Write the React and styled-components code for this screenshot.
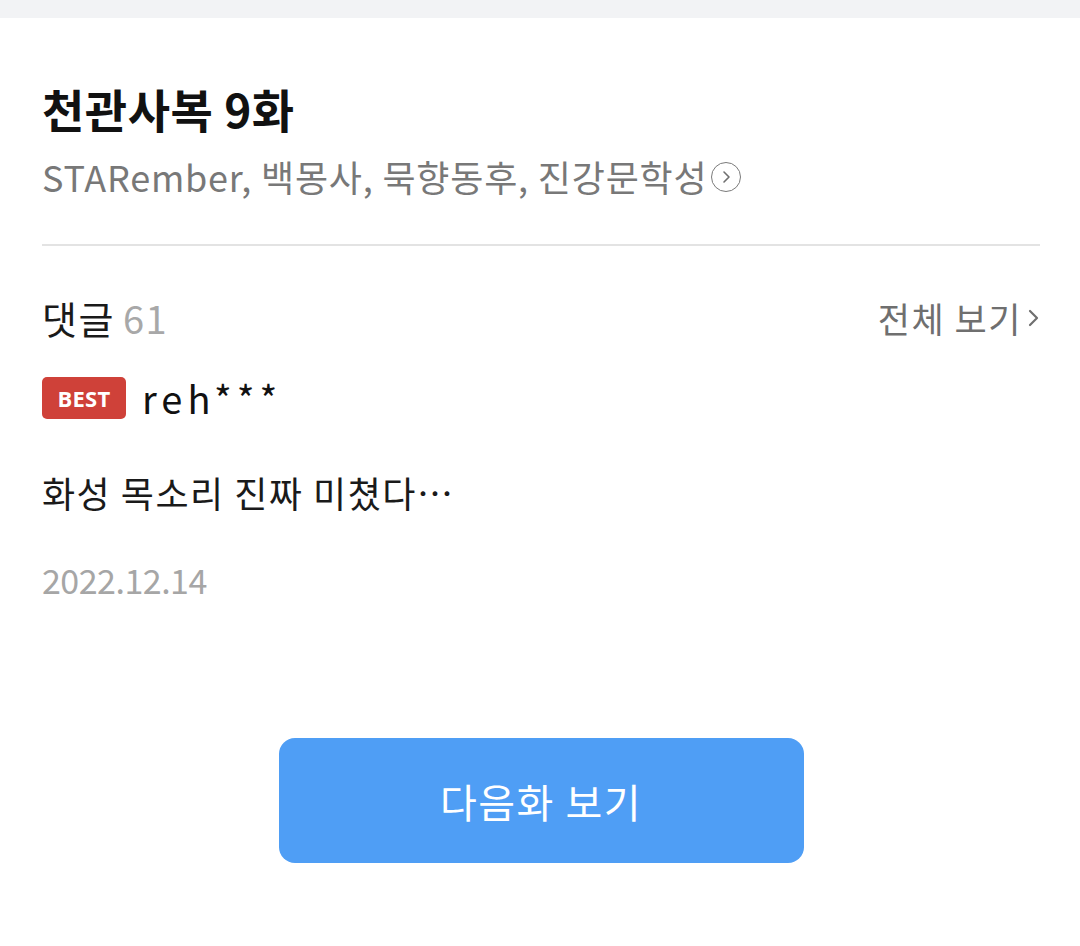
import React from "react";
import styled, { createGlobalStyle } from "styled-components";

const GlobalStyle = createGlobalStyle`
  html, body {
    margin: 0;
    padding: 0;
    background: #ffffff;
  }
  body {
    font-family: "Noto Sans CJK KR", "Noto Sans", sans-serif;
    color: #1a1a1a;
  }
`;

const TopBar = styled.div`
  height: 18px;
  background: #f2f3f5;
`;

const Page = styled.div`
  padding: 0 40px 0 42px;
`;

const Header = styled.section`
  padding-top: 52px;
  padding-bottom: 42px;
  border-bottom: 2px solid #e3e3e3;
`;

const Title = styled.h1`
  margin: 0;
  font-size: 46px;
  font-weight: 700;
  line-height: 76px;
  letter-spacing: 0.5px;
  color: #111;
`;

const Authors = styled.div`
  display: flex;
  align-items: center;
  margin-top: 4px;
  font-size: 36px;
  line-height: 52px;
  color: #787878;
  letter-spacing: 0.8px;
`;

const CircleArrow = styled.span`
  display: inline-flex;
  align-items: center;
  justify-content: center;
  width: 30px;
  height: 30px;
  margin-left: 4px;
  margin-top: 2px;
  border: 1.5px solid #7a7a7a;
  border-radius: 50%;
  box-sizing: border-box;
`;

const CommentSection = styled.section`
  padding-top: 44px;
`;

const SectionHead = styled.div`
  display: flex;
  align-items: center;
  justify-content: space-between;
`;

const CommentTitle = styled.h2`
  margin: 0;
  font-size: 38px;
  font-weight: 400;
  line-height: 56px;
  letter-spacing: 1.5px;
  color: #1a1a1a;
`;

const Count = styled.span`
  color: #a8a8a8;
  margin-left: 8px;
`;

const ViewAll = styled.a`
  display: flex;
  align-items: center;
  gap: 6px;
  font-size: 35px;
  line-height: 56px;
  letter-spacing: 1.5px;
  color: #6f6f6f;
  text-decoration: none;
`;

const UserRow = styled.div`
  display: flex;
  align-items: center;
  gap: 16px;
  margin-top: 27px;
`;

const Badge = styled.span`
  display: inline-flex;
  align-items: center;
  justify-content: center;
  width: 84px;
  height: 42px;
  border-radius: 5px;
  background: #cf4139;
  color: #fff;
  font-family: "Open Sans", "Noto Sans", sans-serif;
  font-size: 22px;
  font-weight: 700;
  letter-spacing: 0.2px;
`;

const UserName = styled.span`
  font-size: 38px;
  line-height: 50px;
  color: #111;
  letter-spacing: 5px;
`;

const CommentText = styled.p`
  margin: 41px 0 0;
  font-size: 36px;
  line-height: 56px;
  letter-spacing: 1.5px;
  color: #1a1a1a;
`;

const DateText = styled.div`
  margin-top: 36px;
  font-size: 34px;
  line-height: 48px;
  color: #a6a6a6;
  letter-spacing: -0.5px;
`;

const ButtonWrap = styled.div`
  display: flex;
  justify-content: center;
  padding-top: 134px;
`;

const NextButton = styled.button`
  width: 525px;
  height: 125px;
  border: none;
  border-radius: 16px;
  background: #4f9ef5;
  color: #fff;
  font-family: "Noto Sans CJK KR", "Noto Sans", sans-serif;
  font-size: 40px;
  font-weight: 400;
  letter-spacing: 1.5px;
  cursor: pointer;
`;

export default function App() {
  return (
    <>
      <GlobalStyle />
      <TopBar />
      <Page>
        <Header>
          <Title>천관사복 9화</Title>
          <Authors>
            STARember, 백몽사, 묵향동후, 진강문학성
            <CircleArrow>
              <svg width="12" height="14" viewBox="0 0 12 14">
                <path d="M4 2 L9 7 L4 12" fill="none" stroke="#6f6f6f" strokeWidth="1.6" strokeLinecap="round" strokeLinejoin="round" />
              </svg>
            </CircleArrow>
          </Authors>
        </Header>
        <CommentSection>
          <SectionHead>
            <CommentTitle>
              댓글<Count>61</Count>
            </CommentTitle>
            <ViewAll href="#">
              전체 보기
              <svg width="12" height="20" viewBox="0 0 12 20">
                <path d="M2 3 L9 10 L2 17" fill="none" stroke="#6f6f6f" strokeWidth="2.2" strokeLinecap="round" strokeLinejoin="round" />
              </svg>
            </ViewAll>
          </SectionHead>
          <UserRow>
            <Badge>BEST</Badge>
            <UserName>reh***</UserName>
          </UserRow>
          <CommentText>화성 목소리 진짜 미쳤다…</CommentText>
          <DateText>2022.12.14</DateText>
        </CommentSection>
        <ButtonWrap>
          <NextButton>다음화 보기</NextButton>
        </ButtonWrap>
      </Page>
    </>
  );
}
